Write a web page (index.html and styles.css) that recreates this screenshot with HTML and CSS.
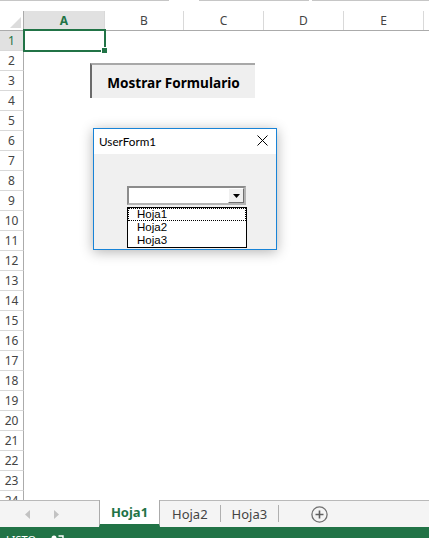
FILE: index.html
```html
<!DOCTYPE html>
<html lang="es">
<head>
<meta charset="utf-8">
<title>Excel</title>
<link rel="stylesheet" href="styles.css">
</head>
<body>
<div class="app">
  <div class="ribbon-edge">
    <span class="seg seg1"></span>
    <span class="seg seg2"></span>
    <span class="seg seg3"></span>
  </div>

  <div class="sheet">
    <div class="colheads">
      <div class="corner"><span class="tri"></span></div>
      <div class="ch sel">A</div>
      <div class="ch">B</div>
      <div class="ch">C</div>
      <div class="ch">D</div>
      <div class="ch">E</div>
      <div class="ch last"></div>
    </div>

    <div class="rows">
      <div class="row"><div class="rh sel">1</div></div>
      <div class="row"><div class="rh">2</div></div>
      <div class="row"><div class="rh">3</div></div>
      <div class="row"><div class="rh">4</div></div>
      <div class="row"><div class="rh">5</div></div>
      <div class="row"><div class="rh">6</div></div>
      <div class="row"><div class="rh">7</div></div>
      <div class="row"><div class="rh">8</div></div>
      <div class="row"><div class="rh">9</div></div>
      <div class="row"><div class="rh">10</div></div>
      <div class="row"><div class="rh">11</div></div>
      <div class="row"><div class="rh">12</div></div>
      <div class="row"><div class="rh">13</div></div>
      <div class="row"><div class="rh">14</div></div>
      <div class="row"><div class="rh">15</div></div>
      <div class="row"><div class="rh">16</div></div>
      <div class="row"><div class="rh">17</div></div>
      <div class="row"><div class="rh">18</div></div>
      <div class="row"><div class="rh">19</div></div>
      <div class="row"><div class="rh">20</div></div>
      <div class="row"><div class="rh">21</div></div>
      <div class="row"><div class="rh">22</div></div>
      <div class="row"><div class="rh">23</div></div>
      <div class="row"><div class="rh">24</div></div>
    </div>

    <div class="selection"><span class="handle"></span></div>

    <div class="btn-form">Mostrar Formulario</div>

    <div class="userform">
      <div class="uf-title">
        <span class="uf-name">UserForm1</span>
        <svg class="uf-close" width="11" height="11" viewBox="0 0 11 11">
          <path d="M0.5 0.5 L10.5 10.5 M10.5 0.5 L0.5 10.5" stroke="#000" stroke-width="1" fill="none"/>
        </svg>
      </div>
      <div class="uf-body">
        <div class="combo">
          <div class="combo-text"></div>
          <div class="combo-btn">
            <svg width="7" height="4" viewBox="0 0 7 4"><path d="M0 0 H7 L3.5 4 Z" fill="#000"/></svg>
          </div>
        </div>
        <div class="listbox">
          <div class="item focus">Hoja1</div>
          <div class="item">Hoja2</div>
          <div class="item">Hoja3</div>
        </div>
      </div>
    </div>
  </div>

  <div class="tabbar">
    <div class="nav">
      <svg width="6" height="9" viewBox="0 0 6 9"><path d="M5 0 V9 L0 4.5 Z" fill="#c2c2c2"/></svg>
      <svg width="6" height="9" viewBox="0 0 6 9"><path d="M0 0 V9 L5 4.5 Z" fill="#c2c2c2"/></svg>
    </div>
    <div class="tab active">Hoja1</div>
    <div class="tab">Hoja2</div>
    <div class="tab sep-after">Hoja3</div>
    <div class="add">
      <svg width="17" height="17" viewBox="0 0 17 17">
        <circle cx="8.5" cy="8.5" r="7.6" fill="none" stroke="#707070" stroke-width="1.3"/>
        <path d="M8.5 4.5 V12.5 M4.5 8.5 H12.5" stroke="#606060" stroke-width="1.6"/>
      </svg>
    </div>
  </div>

  <div class="status">
    <span class="st-text">LISTO</span>
    <svg class="st-icon" width="14" height="14" viewBox="0 0 14 14">
      <circle cx="4" cy="3" r="2.5" fill="#fff"/>
      <path d="M0.5 13 V8 Q4 5.5 7.5 8 V13 Z" fill="#fff"/>
      <path d="M8.5 1 H13 V5" stroke="#fff" stroke-width="1.4" fill="none"/>
    </svg>
  </div>
</div>
</body>
</html>
```

FILE: styles.css
```css
html, body {
  margin: 0;
  padding: 0;
  width: 429px;
  height: 538px;
  overflow: hidden;
  background: #fff;
}

.app {
  width: 429px;
  height: 538px;
  display: flex;
  flex-direction: column;
  font-family: "Noto Sans", "Open Sans", sans-serif;
  color: #444;
}

/* ribbon edge */
.ribbon-edge {
  height: 11px;
  flex: none;
  display: flex;
  align-items: flex-start;
}
.seg {
  display: block;
  height: 1px;
  background: #c6c6c6;
}
.seg1 { width: 169px; }
.seg2 { width: 110px; margin-left: 30px; }
.seg3 { flex: 1; margin-left: 3px; }

/* sheet */
.sheet {
  position: relative;
  height: 489px;
  flex: none;
  overflow: hidden;
}

.colheads {
  display: grid;
  grid-template-columns: 24px 81px 79px 80px 80px 80px 1fr;
  height: 20px;
  border-bottom: 1px solid #ababab;
  box-sizing: border-box;
}
.corner {
  position: relative;
  border-right: 1px solid #ababab;
}
.tri {
  position: absolute;
  right: 2px;
  bottom: 2px;
  width: 0;
  height: 0;
  border-left: 11px solid transparent;
  border-bottom: 11px solid #dcdcdc;
}
.ch {
  border-right: 1px solid #d9d9d9;
  font-size: 12px;
  line-height: 19px;
  text-align: center;
  color: #444;
}
.ch.sel {
  background: #e1e1e1;
  color: #217346;
  font-weight: bold;
}
.ch.last { border-right: none; }

.rows {
  display: flex;
  flex-direction: column;
}
.row {
  height: 20px;
  display: flex;
}
.rh {
  width: 24px;
  height: 20px;
  box-sizing: border-box;
  border-right: 1px solid #ababab;
  border-bottom: 1px solid #d9d9d9;
  font-size: 12px;
  line-height: 19px;
  text-align: center;
  color: #444;
}
.rh.sel {
  background: #e1e1e1;
  color: #217346;
}

/* overlays */
.selection {
  position: absolute;
  left: 23px;
  top: 18px;
  width: 83px;
  height: 23px;
  box-sizing: border-box;
  border: 2px solid #217346;
}
.handle {
  position: absolute;
  right: -4px;
  bottom: -4px;
  width: 5px;
  height: 5px;
  background: #217346;
  border: 1px solid #fff;
}

.btn-form {
  position: absolute;
  left: 90px;
  top: 52px;
  width: 165px;
  height: 35px;
  box-sizing: border-box;
  background: #efefef;
  border-left: 2px solid #6a6a6a;
  border-top: 2px solid #a8a8a8;
  font-family: "Noto Sans", sans-serif;
  font-weight: bold;
  font-size: 13.6px;
  color: #000;
  display: flex;
  align-items: center;
  justify-content: center;
  padding-top: 1px;
}

.userform {
  position: absolute;
  left: 93px;
  top: 117px;
  width: 184px;
  height: 122px;
  box-sizing: border-box;
  border: 1px solid #1883d7;
  background: #f0f0f0;
  box-shadow: 0 2px 12px rgba(0, 0, 0, 0.3);
  display: flex;
  flex-direction: column;
}
.uf-title {
  height: 25px;
  flex: none;
  background: #fff;
  display: flex;
  align-items: center;
  justify-content: space-between;
  padding: 0 8px 0 5px;
}
.uf-name {
  font-family: "Lato", sans-serif;
  font-size: 11.7px;
  color: #000;
  margin-top: -2px;
}
.uf-close { margin-top: -2px; }

.uf-body {
  padding: 32px 0 0 33px;
}
.combo {
  width: 119px;
  height: 19px;
  box-sizing: border-box;
  border-top: 2px solid #8c8c8c;
  border-left: 2px solid #8c8c8c;
  border-right: 2px solid #b4b4b4;
  border-bottom: 2px solid #b4b4b4;
  background: #fff;
  display: flex;
}
.combo-text { flex: 1; }
.combo-btn {
  width: 16px;
  box-sizing: border-box;
  background: #f0f0f0;
  border-left: 1px solid #fff;
  border-top: 1px solid #fff;
  border-right: 1px solid #707070;
  border-bottom: 1px solid #707070;
  display: flex;
  align-items: center;
  justify-content: center;
}
.listbox {
  margin-top: 2px;
  width: 120px;
  height: 41px;
  box-sizing: border-box;
  border: 1px solid #000;
  background: #fff;
  font-family: "Liberation Sans", sans-serif;
  font-size: 11.5px;
  color: #000;
}
.item {
  height: 13px;
  line-height: 13px;
  padding-left: 9px;
  box-sizing: border-box;
}
.item.focus {
  border: 1px dotted #000;
  line-height: 11px;
  padding-left: 8px;
}

/* tab bar */
.tabbar {
  height: 27px;
  flex: none;
  box-sizing: border-box;
  border-top: 1px solid #b9b9b9;
  background: #f4f4f4;
  display: flex;
  align-items: stretch;
  font-family: "Noto Sans", sans-serif;
  font-size: 13px;
}
.nav {
  width: 99px;
  display: flex;
  align-items: center;
  gap: 23px;
  padding-left: 25px;
  box-sizing: border-box;
}
.tab {
  display: flex;
  align-items: center;
  padding: 0 12px;
  color: #444;
  position: relative;
}
.tab + .tab::before,
.tab.sep-after::after {
  content: "";
  position: absolute;
  top: 4px;
  bottom: 5px;
  width: 1px;
  background: #b0b0b0;
}
.tab + .tab::before { left: 0; }
.tab.sep-after::after { right: 0; }
.tab.active {
  width: 61px;
  box-sizing: border-box;
  justify-content: center;
  margin-top: -1px;
  background: #fff;
  border-left: 1px solid #ababab;
  border-right: 1px solid #ababab;
  border-bottom: 3px solid #217346;
  color: #217346;
  font-weight: bold;
  font-size: 13px;
  padding: 0;
}
.tab.active + .tab::before { display: none; }
.add {
  display: flex;
  align-items: center;
  padding-left: 32px;
}

/* status */
.status {
  flex: none;
  height: 22px;
  background: #217346;
  color: #fff;
  display: flex;
  align-items: flex-start;
  padding: 7px 0 0 6px;
  box-sizing: border-box;
  font-family: "Noto Sans", sans-serif;
  font-size: 11px;
}
.st-text { line-height: 12px; }
.st-icon { margin-left: 14px; margin-top: 1px; }
```
